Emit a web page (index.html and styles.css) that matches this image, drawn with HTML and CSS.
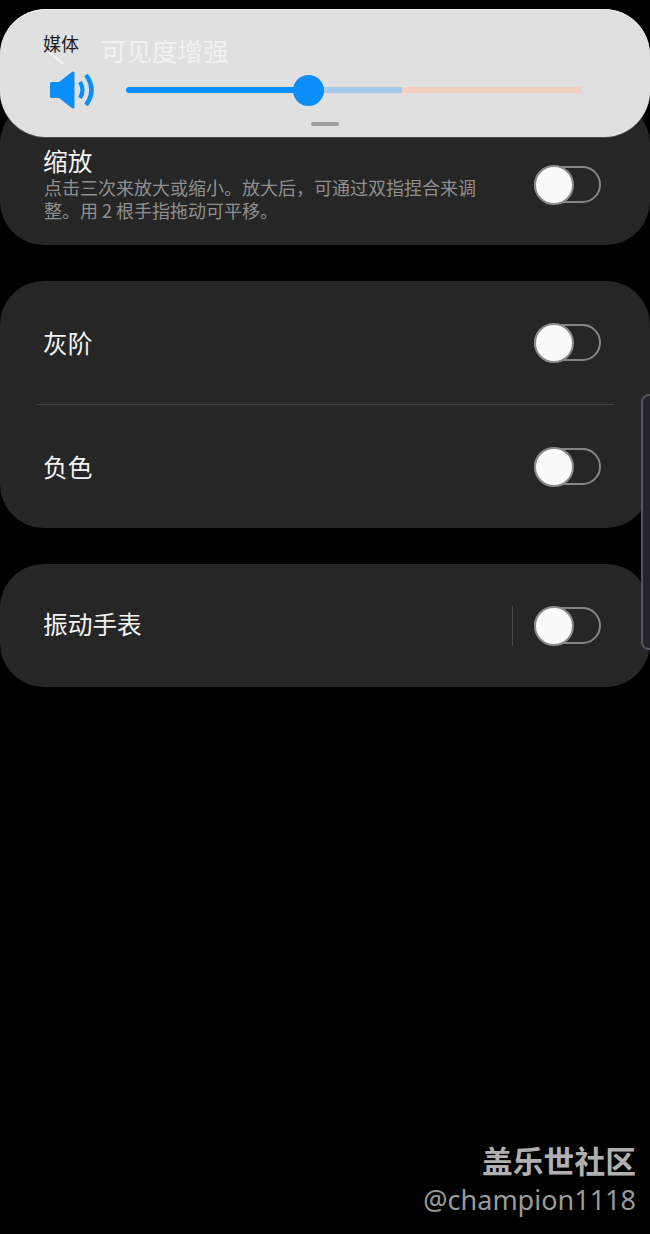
FILE: index.html
```html
<!DOCTYPE html>
<html lang="zh">
<head>
<meta charset="utf-8">
<title>可见度增强</title>
<link rel="stylesheet" href="styles.css">
</head>
<body>
<main class="list">
  <section class="card card-zoom">
    <div class="row row-zoom">
      <div class="text">
        <div class="title">缩放</div>
        <div class="sub">点击三次来放大或缩小。放大后，可通过双指捏合来调整。用 2 根手指拖动可平移。</div>
      </div>
      <div class="toggle"><span class="knob"></span></div>
    </div>
  </section>
  <section class="card">
    <div class="row"><div class="title">灰阶</div><div class="toggle"><span class="knob"></span></div></div>
    <div class="divider"></div>
    <div class="row"><div class="title">负色</div><div class="toggle"><span class="knob"></span></div></div>
  </section>
  <section class="card">
    <div class="row row-watch"><div class="title">振动手表</div><div class="vline"></div><div class="toggle"><span class="knob"></span></div></div>
  </section>
</main>

<aside class="panel">
  <svg class="chevron" width="20" height="20" viewBox="0 0 20 20"><path d="M2 5 L16 17" fill="none" stroke="#f6f6f6" stroke-width="2"/></svg>
  <div class="ghost-title">可见度增强</div>
  <div class="media-label">媒体</div>
  <div class="panel-row">
    <svg class="speaker" width="46" height="38" viewBox="0 0 46 38">
      <path d="M0 12.500 Q0 11 1.500 11 L9 11 L22.500 0.500 Q24.500 0 24.500 2 L24.500 36 Q24.500 38 22.500 37.500 L9 27 L1.500 27 Q0 27 0 25.500 Z" fill="#0a8ffa"/>
      <path d="M30 11 Q35 19 30 27" fill="none" stroke="#0a8ffa" stroke-width="4.200"/>
      <path d="M36 4 Q47 19 36 34" fill="none" stroke="#0a8ffa" stroke-width="4.600"/>
    </svg>
    <div class="slider">
      <span class="seg seg-blue"></span>
      <span class="seg seg-light"></span>
      <span class="seg seg-orange"></span>
      <span class="thumb"></span>
    </div>
  </div>
  <div class="handle"></div>
</aside>

<div class="edge-tab"></div>

<div class="watermark">
  <div class="wm-name">盖乐世社区</div>
  <div class="wm-user">@champion1118</div>
</div>
</body>
</html>
```
FILE: styles.css
```css
* { box-sizing: border-box; }
html, body { margin: 0; padding: 0; }
body {
  position: relative;
  width: 650px;
  height: 1234px;
  overflow: hidden;
  background: #000;
  color: #f4f4f4;
  font-family: "Noto Sans CJK SC", "Noto Sans", sans-serif;
}
.list {
  display: flex;
  flex-direction: column;
  gap: 36px;
  padding-top: 100px;
}
.card {
  background: #262626;
  border-radius: 44px;
  display: flex;
  flex-direction: column;
}
.row {
  height: 123px;
  display: flex;
  align-items: center;
  padding: 0 49px 0 44px;
}
.row > .title { flex: 1; margin-bottom: 2px; }
.row-zoom {
  height: 145px;
  padding-top: 47px;
  align-items: flex-start;
}
.row-zoom .title { line-height: 26px; }
.row-watch > .title { margin-bottom: 5px; }
.text { width: 440px; margin-right: 50px; }
.title {
  font-size: 24.700px;
  line-height: 30px;
  color: #f4f4f4;
  margin-left: -1px;
}
.sub {
  font-size: 18px;
  line-height: 23px;
  color: #8f8f8f;
  margin-top: 3px;
}
.divider {
  height: 1px;
  background: #444;
  margin: 0 36px;
}
.vline {
  width: 1px;
  height: 40px;
  background: #4a4a4a;
  margin-right: 21px;
}
.toggle {
  position: relative;
  flex: none;
  width: 67px;
  height: 37px;
  border: 2px solid #858585;
  border-radius: 19px;
}
.row-zoom .toggle { margin-top: 19px; }
.knob {
  position: absolute;
  left: -2px;
  top: -3px;
  width: 40px;
  height: 40px;
  border-radius: 50%;
  background: #fafafa;
  border: 2px solid #8a8a8a;
}
.panel {
  position: absolute;
  left: 0;
  top: 9px;
  width: 650px;
  height: 128px;
  border-radius: 46px;
  background: #e0e0e0;
  box-shadow: 0 1px 0 #4a4a4a, inset 0 1px 0 #f0f0f0;
}
.chevron {
  position: absolute;
  left: 47px;
  top: 38px;
}
.ghost-title {
  position: absolute;
  left: 101px;
  top: 23px;
  font-size: 25.500px;
  line-height: 36px;
  color: #f2f2f2;
}
.media-label {
  position: absolute;
  left: 43px;
  top: 22px;
  font-size: 18px;
  line-height: 24px;
  color: #1c1c1c;
}
.panel-row {
  position: absolute;
  left: 50px;
  top: 62px;
  width: 532px;
  height: 38px;
  display: flex;
  align-items: center;
  gap: 30px;
}
.speaker { flex: none; }
.slider {
  position: relative;
  flex: 1;
  height: 6px;
  display: flex;
}
.seg { display: block; height: 6px; }
.seg-blue { width: 181px; background: #0a8ffa; border-radius: 3px 0 0 3px; }
.seg-light { width: 95px; background: #a2c9ea; }
.seg-orange { flex: 1; background: #f4cfc0; }
.thumb {
  position: absolute;
  left: 167px;
  top: -12px;
  width: 31px;
  height: 31px;
  border-radius: 50%;
  background: #0a8ffa;
}
.handle {
  position: absolute;
  left: 311px;
  top: 113px;
  width: 28px;
  height: 4px;
  border-radius: 2px;
  background: #a0a0a0;
}
.edge-tab {
  position: absolute;
  left: 641px;
  top: 394px;
  width: 20px;
  height: 256px;
  background: #25222f;
  border: 2px solid #56525f;
  border-radius: 8px;
}
.watermark {
  position: absolute;
  right: 14px;
  top: 1139px;
  text-align: right;
}
.wm-name {
  font-size: 30.800px;
  line-height: 42px;
  font-weight: 700;
  color: #b0b0b0;
}
.wm-user {
  font-family: "Noto Sans", sans-serif;
  font-size: 27px;
  line-height: 38px;
  color: #9a9a9a;
}
```
